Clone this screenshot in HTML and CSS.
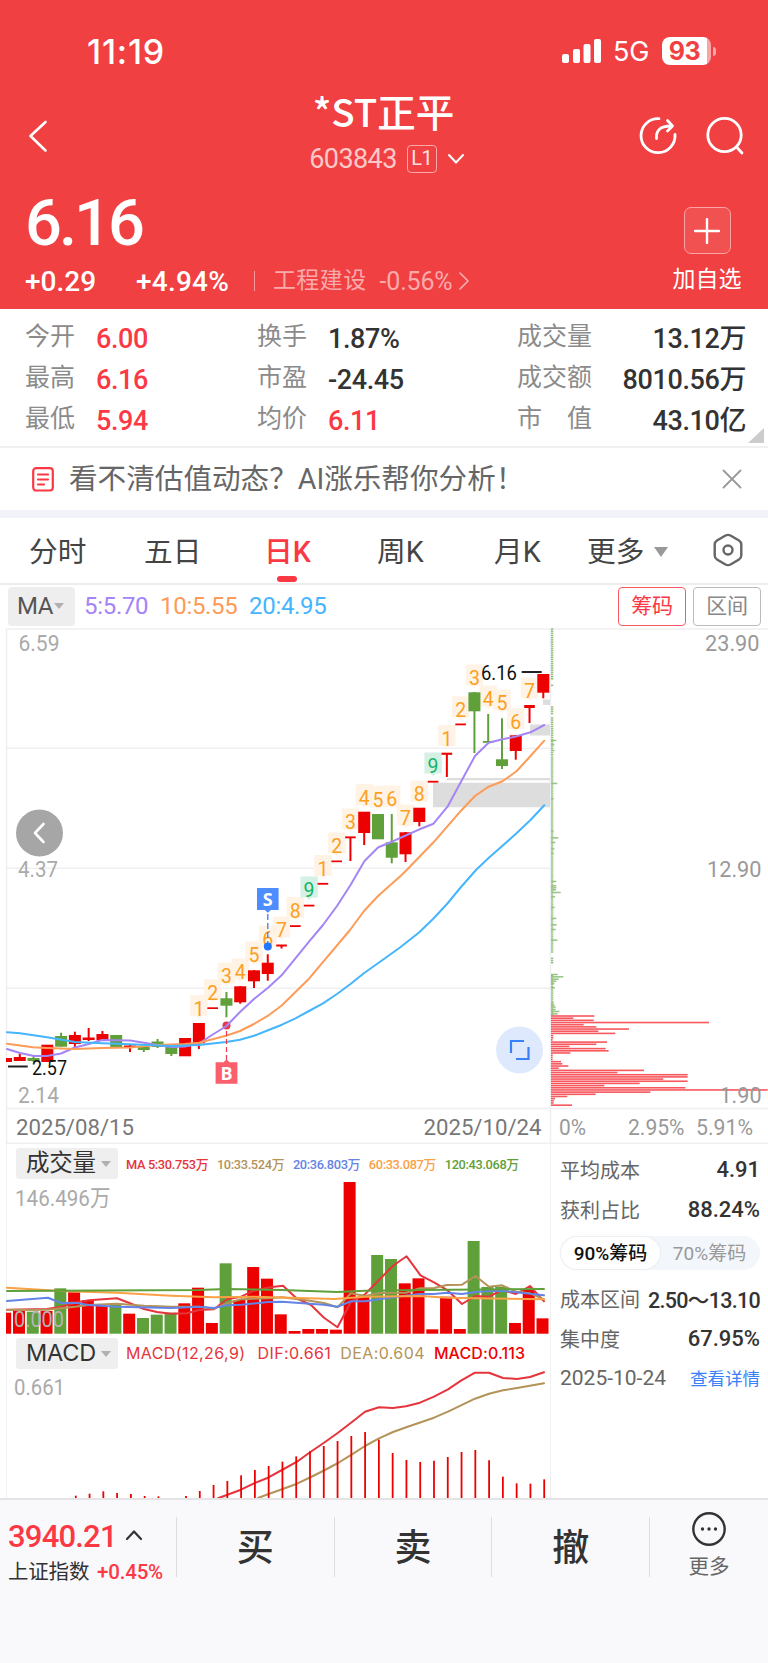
FILE: index.html
```html
<!DOCTYPE html>
<html lang="zh-CN">
<head>
  <meta charset="UTF-8">
  <title>*ST正平 603843</title>
  <link rel="stylesheet" href="styles.css">
</head>
<body>

  <header class="header">
    <div class="status">
      <span class="clock">11:19</span>
      <svg class="signal" width="40" height="26" viewBox="0 0 40 26">
        <rect x="0" y="16" width="7" height="9" rx="2"/>
        <rect x="11" y="11" width="7" height="14" rx="2"/>
        <rect x="21.500" y="6" width="7" height="19" rx="2"/>
        <rect x="32" y="1" width="7" height="24" rx="2"/>
      </svg>
      <span class="net">5G</span>
      <span class="battery"><b>93</b></span>
      <span class="nub"></span>
    </div>

    <div class="nav">
      <svg class="back" width="20" height="34" viewBox="0 0 20 34"><path d="M17.500 3L2.500 17l15 14.500"/></svg>
      <div class="stock">
        <h1>*ST正平</h1>
        <div class="code">
          <span>603843</span><i>L1</i>
          <svg width="18" height="12" viewBox="0 0 18 12"><path d="M2 2l7 7.500L16 2"/></svg>
        </div>
      </div>
      <div class="tools">
        <svg width="40" height="40" viewBox="0 0 40 40">
          <path d="M21 2.700A17 17 0 1 0 37 18.500"/>
          <path d="M18.500 22.500c-.500-8 3.500-12.500 14.500-12.500M29.500 4.500l5 5.500-5 5"/>
        </svg>
        <svg width="40" height="40" viewBox="0 0 40 40">
          <circle cx="19.500" cy="19" r="16.700"/>
          <path d="M31.500 31l5.500 6"/>
        </svg>
      </div>
    </div>

    <div class="quote">
      <div>
        <div class="price">6.16</div>
        <div class="change">
          <span class="diff">+0.29</span><span class="pct">+4.94%</span>
          <span class="sector">工程建设</span><span class="sector-pct">-0.56%</span>
          <svg width="12" height="20" viewBox="0 0 12 20"><path d="M2 2l8 8-8 8"/></svg>
        </div>
      </div>
      <div class="add">
        <span class="add-btn"><svg width="26" height="26" viewBox="0 0 26 26"><path d="M13 1v24M1 13h24"/></svg></span>
        <span>加自选</span>
      </div>
    </div>
  </header>

  <section class="facts">
    <dl>
      <dt>今开</dt><dd class="up">6.00</dd>
      <dt>最高</dt><dd class="up">6.16</dd>
      <dt>最低</dt><dd class="up">5.94</dd>
    </dl>
    <dl>
      <dt>换手</dt><dd>1.87%</dd>
      <dt>市盈</dt><dd>-24.45</dd>
      <dt>均价</dt><dd class="up">6.11</dd>
    </dl>
    <dl class="wide">
      <dt>成交量</dt><dd>13.12万</dd>
      <dt>成交额</dt><dd>8010.56万</dd>
      <dt>市　值</dt><dd>43.10亿</dd>
    </dl>
    <span class="corner"></span>
  </section>

  <div class="notice">
    <svg width="22" height="25" viewBox="0 0 22 25">
      <rect x="1.200" y="1.200" width="19.600" height="22.300" rx="3"/>
      <path d="M6 7.500h10M6 12.500h10M6 17.500h6"/>
    </svg>
    <span>看不清估值动态？AI涨乐帮你分析！</span>
    <svg class="close" width="20" height="20" viewBox="0 0 20 20"><path d="M1.500 1.500l17 17M18.500 1.500l-17 17"/></svg>
  </div>

  <nav class="tabs">
    <span>分时</span>
    <span>五日</span>
    <span><span class="active">日K</span></span>
    <span>周K</span>
    <span>月K</span>
    <span>更多<i class="tri"></i></span>
    <svg width="32" height="34" viewBox="0 0 32 34">
      <path d="M13.500 2.500q2.500-1.300 5 0l8.500 5q2.300 1.400 2.300 4v11q0 2.600-2.300 4l-8.500 5q-2.500 1.300-5 0l-8.500-5q-2.300-1.400-2.300-4v-11q0-2.600 2.300-4z"/>
      <circle cx="16" cy="17" r="4.500"/>
    </svg>
  </nav>

  <div class="ma-bar">
    <span class="pick">MA<i class="tri"></i></span>
    <span class="ma5">5:5.70</span>
    <span class="ma10">10:5.55</span>
    <span class="ma20">20:4.95</span>
    <span class="btn on">筹码</span>
    <span class="btn">区间</span>
  </div>

  <svg class="kline" id="kline" width="768" height="516" viewBox="0 628 768 516"></svg>

  <div class="lower">
    <div class="indicators">
      <div class="ind-head vol-head">
        <span class="pick">成交量<i class="tri"></i></span>
        <span class="c-red">MA 5:30.753万</span>
        <span class="c-brown">10:33.524万</span>
        <span class="c-blue">20:36.803万</span>
        <span class="c-orange">60:33.087万</span>
        <span class="c-green">120:43.068万</span>
      </div>
      <svg class="plot" id="volume" width="550" height="150" viewBox="0 1184 550 150"></svg>
      <div class="ind-head macd-head">
        <span class="pick">MACD<i class="tri"></i></span>
        <span class="c-red">MACD(12,26,9)</span>
        <span class="c-red dif">DIF:0.661</span>
        <span class="c-brown">DEA:0.604</span>
        <span class="c-hot">MACD:0.113</span>
      </div>
      <svg class="plot" id="macd" width="550" height="126" viewBox="0 1372 550 126"></svg>
    </div>

    <aside class="cost">
      <div class="row"><span>平均成本</span><b>4.91</b></div>
      <div class="row"><span>获利占比</span><b>88.24%</b></div>
      <div class="toggle"><span class="sel">90%筹码</span><span>70%筹码</span></div>
      <div class="row"><span>成本区间</span><b class="range">2.50～13.10</b></div>
      <div class="row"><span>集中度</span><b>67.95%</b></div>
      <div class="row"><span class="day">2025-10-24</span><a>查看详情</a></div>
    </aside>
  </div>

  <footer class="bottom">
    <div class="index">
      <div class="index-val">3940.21
        <svg width="18" height="12" viewBox="0 0 18 12"><path d="M2 10l7-7.500L16 10"/></svg>
      </div>
      <div class="index-name">上证指数 <em>+0.45%</em></div>
    </div>
    <div class="act">买</div>
    <div class="act">卖</div>
    <div class="act">撤</div>
    <div class="etc">
      <svg width="36" height="36" viewBox="0 0 36 36">
        <circle cx="18" cy="18" r="15.700"/>
        <path d="M11.500 18h.01M18 18h.01M24.500 18h.01"/>
      </svg>
      更多
    </div>
  </footer>

  <script src="chart.js"></script>
</body>
</html>
```

FILE: styles.css
```css
* { box-sizing: border-box; }
body {
  margin: 0; width: 768px; height: 1663px; overflow: hidden;
  background: #fff; color: #333;
  font-family: Roboto, "Noto Sans CJK SC", sans-serif;
}
h1, dl, dd { margin: 0; }
i, em { font-style: normal; }
svg { display: block; flex: none; fill: none; stroke-linecap: round; stroke-linejoin: round; }
span { white-space: nowrap; }
.up { color: #fb3944; }
.tri {
  display: inline-block; border: 5px solid transparent;
  border-top: 6px solid #b0b0b0; border-bottom: 0;
}

/* header */
.header { height: 309px; background: #f04042; color: #fff; }
.header svg path, .header svg circle { stroke: #fff; }
.status {
  height: 90px; padding: 12px 52px 0 87px;
  display: flex; align-items: center;
  font-family: Inter, sans-serif;
}
.clock { font-size: 34px; font-weight: 500; letter-spacing: .8px; margin-right: auto; }
.signal { margin-right: 11px; fill: #fff; }
.net { font-size: 27px; letter-spacing: -.3px; margin-right: 13px; }
.battery {
  width: 49px; height: 28px; border-radius: 8px; padding-right: 4px;
  background: linear-gradient(90deg, #fff 45px, #f8a5a6 45px);
  color: #f04042; font-size: 25px; line-height: 28px; text-align: center;
}
.battery b { font-weight: 700; letter-spacing: -.5px; }
.nub { width: 3px; height: 9px; margin-left: 2px; border-radius: 0 3px 3px 0; background: #f8a5a6; }

.nav { height: 92px; padding: 0 23px 0 28px; display: grid; grid-template-columns: 260px 1fr 260px; align-items: center; }
.back { stroke-width: 2.6; }
.stock { text-align: center; }
.stock h1 { font: 500 38.500px/40px "Noto Sans CJK SC", sans-serif; padding-bottom: 6px; margin-left: -6px; white-space: nowrap; }
.code { height: 46px; display: flex; align-items: center; justify-content: center; font-size: 27px; color: #fbc9c9; letter-spacing: -.6px; padding-left: 1px; }
.code i {
  width: 30px; height: 28px; margin: 0 10px 0 10px;
  border: 1.500px solid #f8a9a9; border-radius: 4px;
  font-size: 20px; line-height: 25px; text-align: center; color: #fde0e0;
}
.code svg { stroke-width: 2; }
.tools { display: flex; justify-content: flex-end; gap: 27px; stroke-width: 2.8; }

.quote { display: flex; justify-content: space-between; padding: 0 26px 0 25px; }
.price { font-size: 65px; font-weight: 500; line-height: 82px; height: 82px; letter-spacing: -3px; }
.change { height: 34px; display: flex; align-items: center; font-size: 28px; font-weight: 500; }
.pct { margin-left: 40px; letter-spacing: .2px; }
.sector { margin-left: 25px; padding-left: 18px; border-left: 1.500px solid #f79a9b; font-size: 23px; font-weight: 400; line-height: 20px; letter-spacing: .4px; color: #f9abac; }
.sector-pct { margin: 0 6px 0 13px; font-size: 25px; font-weight: 400; letter-spacing: -.2px; color: #f9abac; }
.change svg { stroke-width: 1.6; opacity: .6; }
.add { padding-top: 25px; width: 70px; display: flex; flex-direction: column; align-items: center; font-size: 23px; line-height: 52px; white-space: nowrap; }
.add-btn { width: 47px; height: 47px; border: 1.500px solid #f9a3a4; border-radius: 7px; background: #f25152; display: grid; place-items: center; }
.add svg { stroke-width: 2.4; }

/* key figures */
.facts {
  position: relative; height: 139px; padding: 10px 22px 0 25px;
  display: flex; border-bottom: 2px solid #f0f0f2;
}
.facts dl { display: grid; grid-template-columns: 71px 161px; grid-auto-rows: 41px; line-height: 41px; align-content: start; }
.facts .wide { grid-template-columns: 78px 151px; margin-left: 28px; }
.facts dt { font-size: 25px; color: #8b8b8b; line-height: 36px; }
.facts dd { font-size: 27px; font-weight: 500; letter-spacing: -.4px; }
.facts .wide dd { text-align: right; }
.corner { position: absolute; right: 4px; bottom: 3px; border-left: 16px solid transparent; border-bottom: 15px solid #ccc; }

.notice {
  height: 70px; padding: 0 26px 0 32px;
  display: flex; align-items: center; gap: 15px;
  font-size: 28.600px; line-height: 60px; color: #666; border-bottom: 8px solid #f1f3f9;
}
.notice svg { stroke: #fb3944; stroke-width: 2.2; }
.notice .close { margin-left: auto; stroke: #999; stroke-width: 1.8; }

.tabs {
  height: 67px; border-bottom: 2px solid #ededed; padding: 0 0 3px 29px;
  display: grid; grid-template-columns: 115px 120px 113px 117px 93px 125px 1fr; align-items: center;
  font-size: 28.700px; color: #444;
}
.tabs .active { position: relative; color: #fb3944; font-weight: 500; }
.tabs .active::after {
  content: ""; position: absolute; left: 50%; bottom: -13px; margin-left: -10px;
  width: 20px; height: 6px; border-radius: 3px; background: #fb3944;
}
.tabs .tri { margin-left: 10px; border-width: 10px 7px 0; border-top-color: #999; vertical-align: 5px; }
.tabs svg { stroke: #666; stroke-width: 2.4; margin-top: 2px; }

.ma-bar { height: 43px; padding: 0 7px 1px 8px; display: flex; align-items: center; font-size: 24px; letter-spacing: -.3px; }
.ma-bar .pick { width: 67px; height: 39px; background: #eee; border-radius: 4px; color: #555; line-height: 39px; padding-left: 9px; margin-right: 9px; }
.ma-bar .tri { vertical-align: 5px; margin-left: 1px; }
.ma5 { color: #a485f5; width: 76px; }
.ma10 { color: #fd9b58; width: 89px; }
.ma20 { color: #45b5fd; margin-right: auto; }
.btn { width: 68px; height: 39px; margin-left: 7px; border: 1.500px solid #bbb; border-radius: 4px; color: #888; font-size: 21px; line-height: 36px; text-align: center; }
.btn.on { border-color: #fb5a63; color: #fb3944; }

/* charts */
.grid { stroke: #efeff1; stroke-width: 1.5; }
.line { stroke-width: 2; }
.plot { overflow: visible; }
.lower { display: flex; height: 354px; }
.indicators { width: 551px; background: linear-gradient(#f1f1f3, #f1f1f3) 6px 0 / 1px 100% no-repeat; border-right: 1.500px solid #f1f1f3; overflow: hidden; }
.ind-head { display: flex; align-items: center; padding-left: 16px; }
.ind-head .pick { width: 102px; height: 31px; margin-right: 8px; background: #efefef; border-radius: 3px; padding-left: 10px; font: 23.500px/29px Inter, "Noto Sans CJK SC", sans-serif; letter-spacing: -.2px; color: #333; }
.ind-head .tri { vertical-align: 4px; margin-left: 5px; }
.vol-head { height: 40px; padding-bottom: 1px; font-size: 12.800px; font-weight: 500; letter-spacing: -.35px; }
.vol-head span + span + span { margin-left: 8.800px; }
.macd-head { height: 38px; font-size: 16px; font-family: Inter, sans-serif; letter-spacing: .4px; }
.macd-head span + span + span { margin-left: 9px; }
.macd-head .dif + span { margin-left: 9px; }
.macd-head span.dif { margin-left: 12px; }
.c-red { color: #e6343c; }
.c-brown { color: #b39358; }
.c-blue { color: #6483e6; }
.c-orange { color: #fba145; }
.c-green { color: #5fa03a; }
.macd-head .c-hot { color: #f00000; font-weight: 500; letter-spacing: .1px; }

.cost { flex: 1; padding: 6px 8px 0 9px; }
.row { height: 39.500px; display: flex; justify-content: space-between; align-items: center; font-size: 20px; color: #666; }
.row b { font-size: 22px; font-weight: 500; color: #333; white-space: nowrap; }
.row .range { font-size: 21.500px; letter-spacing: -.7px; }
.row a { font-size: 17.500px; color: #3a80f8; }
.row .day { font-size: 21px; }
.toggle { height: 34px; margin: 7px 0 9px; border-radius: 17px; background: #f3f6fa; display: flex; padding: 1px; }
.toggle span { flex: 1; border-radius: 16px; text-align: center; font-size: 19px; line-height: 33px; color: #999; }
.toggle .sel { background: #fff; color: #111; font-weight: 500; box-shadow: 0 0 3px #dfe4ea; }

/* bottom bar */
.bottom { height: 165px; border-top: 2px solid #e4e4e6; background: #f9f9fc; display: flex; padding-top: 17px; }
.index { width: 176px; padding-left: 8px; }
.index-val { display: flex; align-items: center; gap: 8px; height: 38px; font-size: 31px; font-weight: 500; letter-spacing: -.8px; color: #fb3944; }
.index-val svg { stroke: #333; stroke-width: 2.2; margin-top: -2px; }
.index-name { font-size: 20.500px; line-height: 34px; letter-spacing: -.2px; white-space: nowrap; }
.index-name em { color: #fb3944; margin-left: 3px; font-weight: 500; letter-spacing: -.2px; }
.act { width: 157.700px; height: 60px; border-left: 1.500px solid #dedee1; text-align: center; font-size: 37px; font-weight: 500; line-height: 64px; }
.etc { flex: 1; height: 60px; border-left: 1.500px solid #dedee1; display: flex; flex-direction: column; align-items: center; font-size: 20.500px; line-height: 40px; color: #666; }
.etc svg { stroke: #333; stroke-width: 2.4; margin-top: -6px; }
.etc svg path { stroke-width: 3.4; }
```

FILE: chart.js
```js
const RED = '#ed0000', GREEN = '#5fa03a';
const STEP = 13.777;
const cx = i => 6 + STEP * i;

// [up, body top, body bottom, high, low]
const candles = [
  [1,1058,1062],[1,1057,1061,1054],[0,1058,1061,1056,1062],[1,1044.7,1062],[0,1036,1046.7,1032.7],
  [1,1035,1044,1031.7,1048],[1,1037.5,1040,1028,1041],[1,1034,1040.5,1031],[0,1035,1047],[1,1045.5,1047.2,1045,1052],
  [0,1046.5,1050,1046,1052],[0,1041.5,1047,1039,1048],[0,1047,1054,1047,1056],[1,1038,1056.3],[1,1023,1043.3,1023,1049],
  [1,1007.3,1009],[0,998.3,1005.7,992,1017.3],[1,986.3,1002.3,986,1003.7],[1,970.3,981.3,970,988],[1,962.7,974,954.3,980.7],
  [1,944.5,946.5,945,948.5],[1,925.2,927],[1,904.7,906.5],[1,882.9,884.7],[1,860.5,862.2],
  [1,836.4,838.3,837,861],[1,811.7,833,812,845],[0,814,839.3],[0,842.3,857.7,814,863.3],[1,832.3,854.3,832,862],
  [1,807.7,822,808,826.3],[1,780.8,782.6],[1,752.7,754.8,753,777],[1,723.5,725.3],[0,692.3,711.3,692,753],
  [0,741,742.8,714,742],[0,759.3,766,718.3,769],[1,735.3,751,735,759.7],[1,705,708,705,723],[1,674,692.7,674,698.3]
];

// nine-turn counts: candle index, digit, baseline
const counts = [
  [14,1,1015.5],[15,2,999.5],[16,3,983],[17,4,979],[18,5,962],[19,6,946],[20,7,937],[21,8,917.5],[22,9,897],
  [23,1,875.5],[24,2,853],[25,3,829],[26,4,804.5],[27,5,806.5],[28,6,806],[29,7,825],[30,8,801],[31,9,773],
  [32,1,745.5],[33,2,716.7],[34,3,685],[35,4,706],[36,5,710],[37,6,728.5],[38,7,698]
];

const ma5 = '7,1049 20,1053 34,1056 47,1056 61,1053.5 75,1047.5 89,1044 102,1040 130,1040.5 144,1042.7 157.600,1045 171,1047 185,1046.5 199,1043.5 212,1035 226.500,1026 240,1012 254,999 268,987.700 281.600,975.300 309,941.700 323,925 337,906 350.500,885 364.500,861 378.300,847.300 392,841.700 405.600,835.500 419.500,829.300 433.500,823.700 447.500,806.700 461,781.700 475,756 488.600,742.700 502.500,739.300 516,736.500 530.500,732.300 544.300,725';
const ma10 = '7,1043.7 33,1047.3 47,1048 75,1049 102,1048 130,1047.5 157,1045 185,1044 199,1042.7 226,1035.7 240,1031 254,1024 268,1015.7 282,1005.3 295.500,992 309,978.700 350,930 364,911 378.300,895.700 400,876.500 406.700,870 433.500,842.300 461,810.700 475,796 488.600,786.700 502.500,781.300 516.500,771.300 530.500,756 544.300,740.700';
const ma20 = '7,1032.3 20,1033.3 47,1037.3 75,1042 102,1043.3 130,1044.3 171,1046 199,1045 226,1042 240,1039.7 254,1035.7 268,1030.3 282,1024.7 295.500,1018.3 309,1011 323,1003.3 337,994 350.500,984 364.500,972.700 378,963.300 400,947.500 419,932.500 433,919 447,904 461,887 476,870 488.600,858 516.500,833.300 530.500,820 544.300,805.300';

// chip distribution: row y, bar end x (both at triple scale inside the panel)
const chipsGreen = { 361:80,373:74,391:74,490:83,536:72,633:72,653:86,667:77,686:74,700:72,784:80,797:80,803:80,809:79,817:93,830:76,862:75,895:80,914:81,928:78,960:83,1063:84,1070:101,1077:87,1083:80,1090:74,1103:76,1148:72,1155:75,1161:78,1168:78,1174:89,1181:84 };
const chipsRed = [194,131,192,538,162,200,298,206,257,71,71,69,232,200,119,228,237,122,69,69,69,94,98,116,87,343,263,474,474,401,474,330,224,467,714,362,198,113,76,72,72,127];

const rect = (x, y, w, h, f) => `<rect x="${x}" y="${y}" width="${w}" height="${h}" fill="${f}"/>`;
const seg = (x1, y1, x2, y2, c, w) => `<path d="M${x1} ${y1}L${x2} ${y2}" stroke="${c}" stroke-width="${w}" stroke-linecap="butt"/>`;
const poly = (pts, c) => `<polyline class="line" points="${pts}" stroke="${c}"/>`;
const label = (x, y, s, w, size, c) =>
  `<text x="${x}" y="${y}" font-size="${size}" fill="${c}" textLength="${w}" lengthAdjust="spacingAndGlyphs">${s}</text>`;

function drawKline() {
  let s = '';
  for (const y of [629, 748.3, 868.3, 988.3]) s += `<path class="grid" d="M6.500 ${y}H550"/>`;
  s += '<path class="grid" d="M550 629H768M6.500 1108.500H768M6.500 1143.300H768M6.500 629V1144M550.500 629V1144"/>';

  // price gaps
  s += rect(433, 782.7, 117, 24.6, '#ddd') + rect(447, 778, 103, 2.3, '#ddd');
  s += rect(530, 724.5, 20, 11, '#ddd') + rect(543, 699.5, 7, 5.5, '#ddd');

  s += label(18.5, 651, '6.59', 41, 22.5, '#aaa') + label(18, 877.3, '4.37', 40, 22.5, '#aaa') + label(18, 1103.3, '2.14', 41, 22.5, '#aaa');

  for (const [i, n, y] of counts) {
    const x = cx(i), nine = n === 9;
    s += `<path d="M${x - 8.7} ${y - 20.5}h17.400v21h-6l-2.700 2.500l-2.700-2.500h-6z" fill="${nine ? '#d5f0e4' : '#fff3e6'}"/>`;
    s += `<text x="${x}" y="${y}" font-size="19.500" text-anchor="middle" fill="${nine ? '#16b364' : '#fba01e'}">${n}</text>`;
  }

  candles.forEach(([up, t, b, hi = t, lo = b], i) => {
    const c = up ? RED : GREEN, w = b - t < 3.2 && i > 14 ? 10.6 : 12;
    const x = Math.max(cx(i) - w / 2, 6);
    s += rect(x, t, cx(i) + w / 2 - x, b - t, c);
    if (hi < t || lo > b) s += seg(cx(i), hi, cx(i), lo, c, 2);
  });

  s += `<circle cx="226.500" cy="1025.500" r="4" fill="#e8384f"/>`;
  s += poly(ma5, '#a485f5') + poly(ma10, '#fd9b58') + poly(ma20, '#45b5fd');

  // sell / buy marks
  s += '<path d="M267.800 914V944" stroke="#3a80f8" stroke-width="1.300" stroke-linecap="butt" stroke-dasharray="6 3"/><circle cx="267.800" cy="946.500" r="4" fill="#2376ff"/>';
  s += '<path d="M257 888h21.600v22h-7.800l-3 2.800l-3-2.800H257z" fill="#4d8dff"/>';
  s += '<path d="M226.500 1031V1060" stroke="#e8384f" stroke-width="1.200" stroke-linecap="butt" stroke-dasharray="5 3"/>';
  s += '<path d="M215.600 1083.700h21.800v-21.500h-7.900l-3-3l-3 3h-7.900z" fill="#fa5f6b"/>';
  s += '<text x="267.800" y="905.500" font-size="18" font-weight="700" font-family="Open Sans" text-anchor="middle" fill="#fff">S</text>';
  s += '<text x="226.500" y="1079.500" font-size="18" font-weight="700" font-family="Open Sans" text-anchor="middle" fill="#fff">B</text>';

  s += label(481, 680, '6.16', 36, 20.5, '#111') + seg(521.7, 672, 541.7, 672, '#222', 2);
  s += label(32, 1074.5, '2.57', 35, 20.5, '#111') + seg(8, 1066.5, 27.7, 1066.5, '#222', 2);

  s += '<circle cx="39.500" cy="833" r="23.500" fill="#a6a6a6"/><path d="M43.500 824L35 833l8.500 9" stroke="#fff" stroke-width="2.600"/>';
  s += '<circle cx="519.500" cy="1050" r="23.500" fill="#dfe9fe"/><path d="M524 1041H511V1053M516 1059H528.500V1047" stroke="#3a80f8" stroke-width="2.200" stroke-linecap="butt" stroke-linejoin="miter"/>';

  // chips: thin dotted spine, then the peaks
  for (let y = 27; y < 1186; y += 6.5) {
    if ((y > 181 && y < 195) || (y > 201 && y < 261) || (y > 286 && y < 293) || (y > 996 && y < 1009) || (y > 1029 && y < 1061)) continue;
    s += rect(551, 620 + y / 3 - .7, 2.3, 1.5, '#8fc178');
  }
  s += rect(551, 756, 1.8, 196, '#b2d4a2') + rect(551, 987, 1.5, 28, '#b2d4a2');
  for (const y in chipsGreen) s += rect(551, 620 + y / 3 - .6, (chipsGreen[y] - 64) / 3, 1.5, '#98c484');
  chipsRed.forEach((end, i) => s += rect(551, 1015.2 + i * 2.175, (end - 64) / 3, 1.6, '#f7585e'));

  s += label(705, 651, '23.90', 54.5, 22.5, '#999') + label(707, 877.3, '12.90', 54.5, 22.5, '#999') + label(719.5, 1103.3, '1.90', 42, 22.5, '#999');
  s += label(16, 1135, '2025/08/15', 118, 21.5, '#777') + label(423.5, 1135, '2025/10/24', 118, 21.5, '#777');
  s += label(559, 1135, '0%', 27, 21.5, '#999') + label(628, 1135, '2.95%', 56.5, 21.5, '#999') + label(696, 1135, '5.91%', 57, 21.5, '#999');
  document.getElementById('kline').innerHTML = s;
}

// points are "x,y" with y in thirds of a pixel from 1140
const low = pts => pts.split(' ').map(p => { const [x, y] = p.split(','); return x + ',' + (1140 + y / 3).toFixed(1); }).join(' ');

function drawVolume() {
  const tops = [518,513,515,513,445,457,480,498,495,521,534,524,518,490,443,549,370,480,381,416,523,573,567,567,569,126,470,345,357,430,415,568,470,567,303,441,440,549,450,535];
  const greens = [2,4,8,10,11,12,16,27,28,34,35,36];
  let s = '';
  tops.forEach((t, i) => {
    const x = Math.max(cx(i) - 6.8, 6), r = cx(i) + 5.2, y = 1140 + t / 3;
    s += rect(x, y, r - x, 1333.7 - y, greens.includes(i) ? GREEN : RED);
  });
  s += poly(low('7,509 47,507 61,500 80,485 89,481 117,475 130,490 144,507 157,516 171,521 187,520 199,510 214,508 227,478 241,470 254,452 270,442 283,437 297,476 311,495 324,533 337.500,562 351,485 365,463 379,420 393,377 406.600,349 420.500,406 434,427 448,452 462,492 475,468 489,470 502,450 516,462 530,438 544,484'), '#e6343c');
  s += poly(low('7,510 47,509 75,500 89,495 117,491 144,497 171,500 199,500 214,506 227,490 241,478 268,475 282,472 310,482 325,490 337.500,502 351,460 365,468 379,459 406,458 420,445 434,444 447,435 462,434 475.500,408 489,440 502,436 516,455 530,460 544,478'), '#b39358');
  s += poly(low('7,483 48,473 61,489 75,488 89,495 117,500 171,504 199,500 214,504 227,496 241,494 268,486 282,485 324,494 337.500,500 351,484 365,484 393,472 420,462 434,462 447,458 462,462 475,456 489,453 502,452 516,457 544,466'), '#6483e6');
  s += poly(low('7,443 61,453 117,458 171,467 214,472 254,470 335,477 365,470 420,468 448,473 475,475 544,478'), '#fba145');
  s += poly(low('7,453 199,450 226,447 282,450 337,456 365,452 420,450 544,447'), GREEN);
  s += label(15, 1206, '146.496万', 95.5, 22.5, '#aaa') + label(14, 1327, '0.000', 50, 22.5, '#b4b4b4');
  document.getElementById('volume').innerHTML = s;
}

function drawMacd() {
  const tops = { 5:1067,6:1061,7:1054,8:1059,9:1062,10:1068,11:1069,13:1068,14:1053,15:1035,16:1023,17:1006,18:990,19:978,20:965,21:949,22:934,23:918,24:903,25:888,26:876,27:899,28:939,29:960,30:966,31:962,32:951,33:936,34:930,35:961,36:1010,37:1030,38:1031,39:1018 };
  let s = poly(low('218,1075 241,1049 254,1030 268,1013 282,990 297,965 310,937 324,908 338,878 352,846 365,815 379,802 393,804 406,799 420,788 434,770 448,748 461,722 475,698 489,698 503,714 517,717 530,711 544,697'), '#e6343c');
  s += poly(low('258,1074 268,1063 282,1048 297,1031 311,1011 325,990 338,969 352,943 365,918 379,895 393,876 407,861 434,833 448,815 461,796 475,776 489,761 503,751 517,744 544,730'), '#b39358');
  for (const i in tops) s += seg(cx(+i) + .9, 1140 + tops[i] / 3, cx(+i) + .9, 1498, RED, 1.8);
  s += label(14, 1395, '0.661', 51, 22.5, '#aaa');
  document.getElementById('macd').innerHTML = s;
}

drawKline();
drawVolume();
drawMacd();
```
